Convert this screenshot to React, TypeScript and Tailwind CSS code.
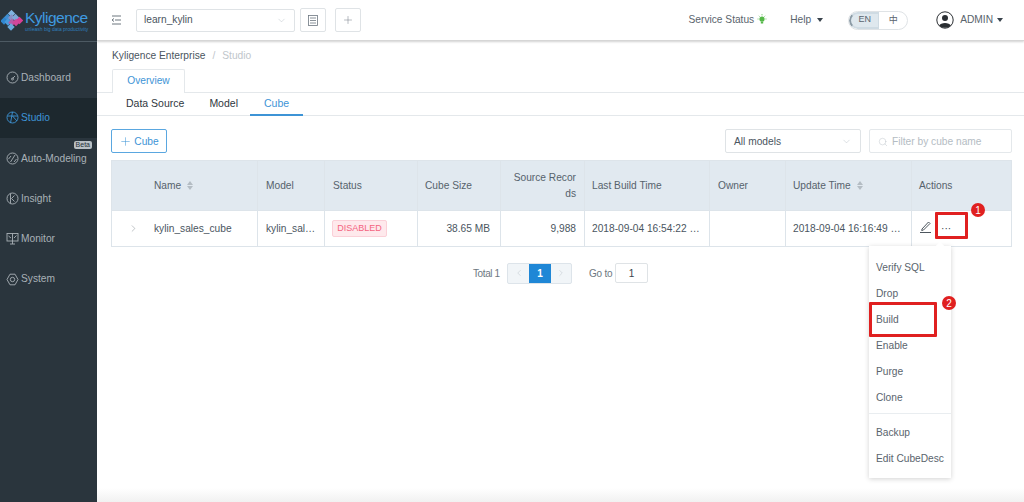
import React from "react";
import { ChevronDown, ChevronRight, ChevronLeft, Plus, Search } from "lucide-react";

function Logo() {
  const d = (x: number, y: number, c: string) => (
    <rect key={x + "-" + y} x={x - 2.6} y={y - 2.6} width={5.2} height={5.2} fill={c} transform={`rotate(45 ${x} ${y})`} />
  );
  return (
    <svg width="22" height="21" viewBox="0 0 22 21" className="shrink-0">
      {d(10.5, 3.5, "#7fb4e0")}
      {d(6.5, 7.5, "#3f8fd2")}
      {d(10.5, 8, "#8a8fc4")}
      {d(14.5, 7.5, "#7fa8d8")}
      {d(3, 11, "#2f86cf")}
      {d(7, 12, "#4a9bdc")}
      {d(11, 12.5, "#b85aa8")}
      {d(18.5, 10.5, "#d83f96")}
      {d(15, 12.5, "#d3479a")}
      {d(10, 17, "#6aa9dc")}
    </svg>
  );
}

function NavIcon({ name, color }: { name: string; color: string }) {
  const common = { fill: "none", stroke: color, strokeWidth: 0.9 };
  return (
    <svg width="13" height="13" viewBox="0 0 13 13" className="shrink-0" {...common}>
      {name === "dash" && (
        <>
          <circle cx="6.5" cy="6.5" r="5.5" />
          <path d="M6.5 7.5 L9 5" />
          <circle cx="6.5" cy="8" r="1" />
        </>
      )}
      {name === "studio" && (
        <>
          <circle cx="6.5" cy="6.5" r="5.5" />
          <path d="M1.5 5 L11.5 5 M6.5 1 L4.5 12 M6.5 5 L11 10" />
        </>
      )}
      {name === "auto" && (
        <>
          <circle cx="6.5" cy="6.5" r="5.5" />
          <path d="M9 3 L4.5 10 M2.5 7 L5 4 M8 10 L10.5 7" />
        </>
      )}
      {name === "insight" && (
        <>
          <circle cx="6.5" cy="6.5" r="5.5" />
          <path d="M4.5 1.5 V11.5 M8.5 3.5 L5.5 6.5 L8.5 9.5" />
        </>
      )}
      {name === "monitor" && (
        <>
          <rect x="1" y="1.5" width="11" height="7.5" />
          <path d="M6.5 1.5 V12 M4 12 H9 M2.5 4 L5 6 M8 6 L10.5 3.5" />
        </>
      )}
      {name === "system" && (
        <>
          <path d="M4 1.2 H9 L12 6.5 L9 11.8 H4 L1 6.5 Z" />
          <circle cx="6.5" cy="6.5" r="2.2" />
        </>
      )}
    </svg>
  );
}

function Sort() {
  return (
    <span className="ml-[6px] inline-flex flex-col gap-[1px]">
      <span className="h-0 w-0 border-x-[3.5px] border-b-[4px] border-x-transparent border-b-[#b4bcc3]" />
      <span className="h-0 w-0 border-x-[3.5px] border-t-[4px] border-x-transparent border-t-[#b4bcc3]" />
    </span>
  );
}

const nav = [
  { label: "Dashboard", icon: "dash" },
  { label: "Studio", icon: "studio", active: true },
  { label: "Auto-Modeling", icon: "auto", beta: true },
  { label: "Insight", icon: "insight" },
  { label: "Monitor", icon: "monitor" },
  { label: "System", icon: "system" },
];

const gridCols = "grid grid-cols-[146px_67px_93px_83px_84px_125px_76px_126px_100px]";
const cell = "flex items-center border-r border-[#dde4ea] px-[8px]";
const cell7 = "flex items-center border-r border-[#dde4ea] px-[7px]";

export default function App() {
  return (
    <div className="relative flex h-[502px] w-[1024px] overflow-hidden bg-white font-['Liberation_Sans',sans-serif] text-[10.2px] text-[#4a5560]">
      <aside className="flex w-[97px] shrink-0 flex-col bg-[#2a353d]">
        <div className="flex h-[42px] items-center gap-[2px] border-b border-[#4d5a63] pl-[1px]">
          <Logo />
          <div className="flex flex-col leading-none">
            <span className="text-[15.5px] leading-[15px] tracking-[-0.5px] text-[#3f9ae0]">Kyligence</span>
            <span className="mt-[1px] whitespace-nowrap text-[5px] leading-[6px] text-[#2f7fbd]">unleash big data productivity</span>
          </div>
        </div>
        <nav className="mt-[15.5px] flex flex-col">
          {nav.map((n) => (
            <div
              key={n.label}
              className={
                "relative flex h-[40.3px] items-center gap-[2px] whitespace-nowrap pl-[6px] text-[10.2px] " +
                (n.active ? "bg-[#1d282e] text-[#3d94d6]" : "text-[#a9b1b7]")
              }
            >
              <NavIcon name={n.icon} color={n.active ? "#3d94d6" : "#a9b1b7"} />
              <span>{n.label}</span>
              {n.beta && (
                <span className="absolute right-[5px] top-[3px] rounded-[2px] bg-[#b9c0c5] px-[2px] text-[7px] leading-[8px] text-[#27323a]">
                  Beta
                </span>
              )}
            </div>
          ))}
        </nav>
      </aside>

      <main className="relative flex min-w-0 flex-1 flex-col">
        <header className="flex h-[41px] shrink-0 items-center border-b border-[#d6d6d6] pl-[14px] shadow-[0_1px_2px_rgba(0,0,0,0.18)]">
          <svg width="11" height="10" viewBox="0 0 11 10" fill="none" stroke="#5b6670" strokeWidth="0.9">
            <path d="M1 1 H10 M4 5 H10 M1 9 H10 M3 3.5 L1 5 L3 6.5" />
          </svg>
          <div className="ml-[14px] flex h-[23px] w-[159px] items-center justify-between rounded-[2px] border border-[#dfe3e6] pl-[7px] pr-[7px]">
            <span>learn_kylin</span>
            <ChevronDown size={11} strokeWidth={1} className="text-[#b4bcc3]" />
          </div>
          <div className="ml-[5px] flex h-[24px] w-[26px] items-center justify-center rounded-[2px] border border-[#dfe3e6]">
            <svg width="10" height="11" viewBox="0 0 10 11" fill="none" stroke="#6d7780" strokeWidth="0.8">
              <rect x="0.5" y="0.5" width="9" height="10" />
              <path d="M2 3 H8 M2 5.5 H8 M2 8 H8" />
            </svg>
          </div>
          <div className="ml-[9px] flex h-[24px] w-[26px] items-center justify-center rounded-[2px] border border-[#dfe3e6]">
            <Plus size={12} strokeWidth={1} className="text-[#6d7780]" />
          </div>
          <div className="ml-auto flex items-center whitespace-nowrap pr-[21px] text-[#5a646d]">
            <span>Service Status</span>
            <svg width="10" height="11" viewBox="0 0 10 11" className="ml-[3px] -mt-[2px]" fill="#55b848">
              <circle cx="5" cy="5" r="2.6" />
              <rect x="3.8" y="7.5" width="2.4" height="2" />
              <path d="M5 0 V1.4 M0.5 5 H1.6 M8.4 5 H9.5 M1.8 1.8 L2.6 2.6 M8.2 1.8 L7.4 2.6" stroke="#55b848" strokeWidth="0.7" />
            </svg>
            <span className="ml-[23px]">Help</span>
            <span className="ml-[6px] h-0 w-0 border-x-[3px] border-t-[4px] border-x-transparent border-t-[#39434c]" />
            <div className="ml-[25px] flex h-[19px] w-[60px] overflow-hidden rounded-full border border-[#dfe3e6] text-[9px]">
              <span className="flex w-[30px] items-center justify-center rounded-l-full border-2 border-r border-[#cfdbe3] border-l-[#8a9aa5] bg-[#dfe8ee]">EN</span>
              <span className="flex flex-1 items-center justify-center font-['Noto_Sans_CJK_SC',sans-serif]">中</span>
            </div>
            <svg width="18" height="18" viewBox="0 0 18 18" className="ml-[28px] -mt-[1px]">
              <circle cx="9" cy="9" r="8.2" fill="#fff" stroke="#2b2f33" strokeWidth="1" />
              <circle cx="9" cy="7" r="3" fill="#2b2f33" />
              <path d="M3.2 14.5 C4.5 11 13.5 11 14.8 14.5 C12 17.5 6 17.5 3.2 14.5 Z" fill="#2b2f33" />
            </svg>
            <span className="ml-[6px]">ADMIN</span>
            <span className="ml-[4px] h-0 w-0 border-x-[3px] border-t-[4px] border-x-transparent border-t-[#39434c]" />
          </div>
        </header>

        <div className="flex h-[28px] shrink-0 items-center pl-[15px] pt-[1px]">
          <span>Kyligence Enterprise</span>
          <span className="mx-[7px] text-[#c0c6cb]">/</span>
          <span className="text-[#c0c6cb]">Studio</span>
        </div>

        <div className="flex h-[24px] shrink-0 border-b border-[#e4e8eb] pl-[15px]">
          <div className="-mb-[1px] flex w-[73px] items-center justify-center rounded-t-[2px] border border-b-0 border-[#e4e8eb] bg-white pb-[1px] text-[#3d94d6]">
            Overview
          </div>
        </div>

        <div className="flex h-[23px] shrink-0 items-stretch border-b border-[#e4e8eb] pl-[29px] text-[10.5px] text-[#2f373e]">
          <div className="flex items-center pb-[1px]">Data Source</div>
          <div className="ml-[25px] flex items-center pb-[1px]">Model</div>
          <div className="-mb-[1px] ml-[12px] flex items-center border-b-[2px] border-[#3d94d6] px-[14px] text-[#3d94d6]">Cube</div>
        </div>

        <div className="flex shrink-0 items-center justify-between pl-[14px] pr-[12px] pt-[13px]">
          <div className="flex h-[24px] w-[56px] items-center justify-center gap-[2px] rounded-[2px] border border-[#5aa7e0] pt-[1px] text-[#3d94d6]">
            <Plus size={13} strokeWidth={1} />
            <span>Cube</span>
          </div>
          <div className="flex gap-[8px]">
            <div className="flex h-[24px] w-[136px] items-center justify-between rounded-[2px] border border-[#dfe3e6] px-[8px] pt-[1px]">
              <span>All models</span>
              <ChevronDown size={11} strokeWidth={1} className="text-[#b4bcc3]" />
            </div>
            <div className="flex h-[24px] w-[143px] items-center gap-[4px] rounded-[2px] border border-[#e4e8eb] pl-[8px] pt-[1px] text-[#b4bcc3]">
              <Search size={10} strokeWidth={1} />
              <span>Filter by cube name</span>
            </div>
          </div>
        </div>

        <div className="ml-[14px] mt-[7px] w-[901px] shrink-0 border border-[#dde4ea]">
          <div className={gridCols + " h-[50px] border-b border-[#dde4ea] bg-[#e1e9f0] text-[#56626c]"}>
            <div className={cell + " pl-[42px]"}>Name<Sort /></div>
            <div className={cell}>Model</div>
            <div className={cell}>Status</div>
            <div className={cell7}>Cube Size</div>
            <div className={cell + " justify-end text-right leading-[16px] [word-break:break-all]"}>Source Records</div>
            <div className={cell7}>Last Build Time</div>
            <div className={cell}>Owner</div>
            <div className={cell7}>Update Time<Sort /></div>
            <div className={cell7 + " border-r-0"}>Actions</div>
          </div>
          <div className={gridCols + " h-[35px] text-[#4a5560]"}>
            <div className={cell + " relative pl-[42px]"}>
              <ChevronRight size={11} strokeWidth={1} className="absolute left-[16px] text-[#777f87]" />
              kylin_sales_cube
            </div>
            <div className={cell}>kylin_sal…</div>
            <div className={cell7}>
              <span className="flex h-[17px] w-[55px] items-center justify-center rounded-[2px] border border-[#fbd0d8] bg-[#fee9ec] text-[9px] text-[#f4637f]">DISABLED</span>
            </div>
            <div className={cell + " justify-end pr-[10px]"}>38.65 MB</div>
            <div className={cell + " justify-end"}>9,988</div>
            <div className={cell7 + " whitespace-nowrap"}>2018-09-04 16:54:22 …</div>
            <div className={cell}></div>
            <div className={cell7 + " whitespace-nowrap"}>2018-09-04 16:16:49 …</div>
            <div className="flex items-center pl-[7px]">
              <svg width="13" height="12" viewBox="0 0 13 12" fill="none" stroke="#39434c" strokeWidth="0.9" className="-mt-[3px]">
                <path d="M3 8 L9.5 1 L11 2.5 L4.5 9 L2.7 9.5 Z M1 11.5 H12" />
              </svg>
              <span className="ml-[9px] text-[#39434c]">···</span>
            </div>
          </div>
        </div>

        <div className="mt-[15px] flex h-[22px] shrink-0 items-center pl-[376px] text-[10px] text-[#6d7780]">
          <span className="w-[26px] whitespace-nowrap tracking-[-0.4px]">Total 1</span>
          <div className="ml-[8px] flex h-[21px] w-[65px] overflow-hidden rounded-[2px] border border-[#dde4ea] bg-[#f1f5f8]">
            <span className="flex w-[21px] items-center justify-center"><ChevronLeft size={10} strokeWidth={1} className="text-[#b4bcc3]" /></span>
            <span className="flex w-[22px] items-center justify-center bg-[#1f87d6] font-bold text-white">1</span>
            <span className="flex flex-1 items-center justify-center"><ChevronRight size={10} strokeWidth={1} className="text-[#b4bcc3]" /></span>
          </div>
          <span className="ml-[17px] w-[23px] whitespace-nowrap tracking-[-0.2px]">Go to</span>
          <span className="ml-[3px] flex h-[20px] w-[33px] items-center justify-center rounded-[2px] border border-[#dfe3e6] text-[#39434c]">1</span>
        </div>

        <div className="mt-auto h-[14px] shrink-0 bg-gradient-to-b from-white to-[#f1f1f1]" />
      </main>

      {/* dropdown menu */}
      <div className="absolute left-[869px] top-[246px] flex h-[232px] w-[82px] flex-col bg-white pt-[9px] text-[#5a646d] shadow-[0_1px_5px_rgba(0,0,0,0.18)]">
        <span className="absolute -top-[3px] left-[68px] h-[6px] w-[6px] rotate-45 bg-white" />
        {["Verify SQL", "Drop", "Build", "Enable", "Purge", "Clone"].map((t) => (
          <div key={t} className="flex h-[26px] shrink-0 items-center pl-[7px]">{t}</div>
        ))}
        <div className="mt-[2px] h-px shrink-0 bg-[#e9edf0]" />
        <div className="mt-[6px] flex h-[26px] shrink-0 items-center pl-[7px]">Backup</div>
        <div className="flex h-[26px] shrink-0 items-center whitespace-nowrap pl-[7px]">Edit CubeDesc</div>
      </div>

      {/* annotations */}
      <div className="absolute left-[935px] top-[212px] h-[27px] w-[33px] rounded-[1px] border-[3px] border-[#e02020]" />
      <div className="absolute left-[971px] top-[203px] flex h-[14px] w-[14px] items-center justify-center rounded-full bg-[#e02020] text-[10px] text-white">1</div>
      <div className="absolute left-[869px] top-[302px] h-[35px] w-[68px] rounded-[1px] border-[3px] border-[#e02020]" />
      <div className="absolute left-[942px] top-[296px] flex h-[14px] w-[14px] items-center justify-center rounded-full bg-[#e02020] text-[10px] text-white">2</div>
    </div>
  );
}
